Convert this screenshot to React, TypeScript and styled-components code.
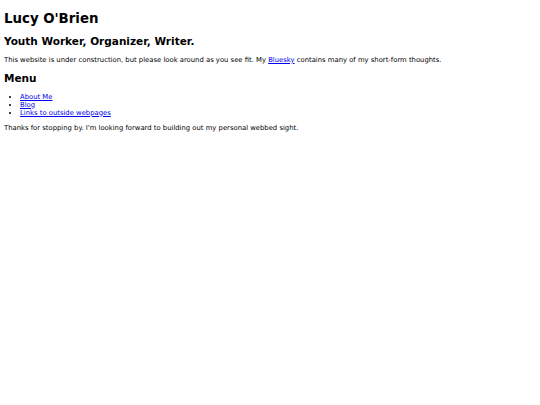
import React from "react";
import styled, { createGlobalStyle } from "styled-components";

const GlobalStyle = createGlobalStyle`
  body {
    margin: 4px;
    background: #fff;
    color: #000;
    font-family: "DejaVu Sans", Verdana, sans-serif;
    font-size: 6.83px;
  }
`;

const Title = styled.h1`
  font-size: 13.33px;
  font-weight: bold;
  margin: 7px 0 9px;
`;

const Heading = styled.h2`
  font-size: 10.5px;
  font-weight: bold;
  margin: 8.5px 0;
`;

const Para = styled.p`
  margin: 1em 0;
`;

const Menu = styled.ul`
  margin: 8px 0 7px;
  padding-left: 16px;
  list-style: disc;
`;

const Link = styled.a`
  color: #0000ee;
  text-decoration: underline;
`;

export default function App() {
  return (
    <>
      <GlobalStyle />
      <Title>Lucy O'Brien</Title>
      <Heading>Youth Worker, Organizer, Writer.</Heading>
      <Para>
        This website is under construction, but please look around as you see
        fit. My <Link href="#">Bluesky</Link> contains many of my short-form
        thoughts.
      </Para>
      <Heading>Menu</Heading>
      <Menu>
        <li>
          <Link href="#">About Me</Link>
        </li>
        <li>
          <Link href="#">Blog</Link>
        </li>
        <li>
          <Link href="#">Links to outside webpages</Link>
        </li>
      </Menu>
      <Para>
        Thanks for stopping by. I'm looking forward to building out my personal
        webbed sight.
      </Para>
    </>
  );
}
